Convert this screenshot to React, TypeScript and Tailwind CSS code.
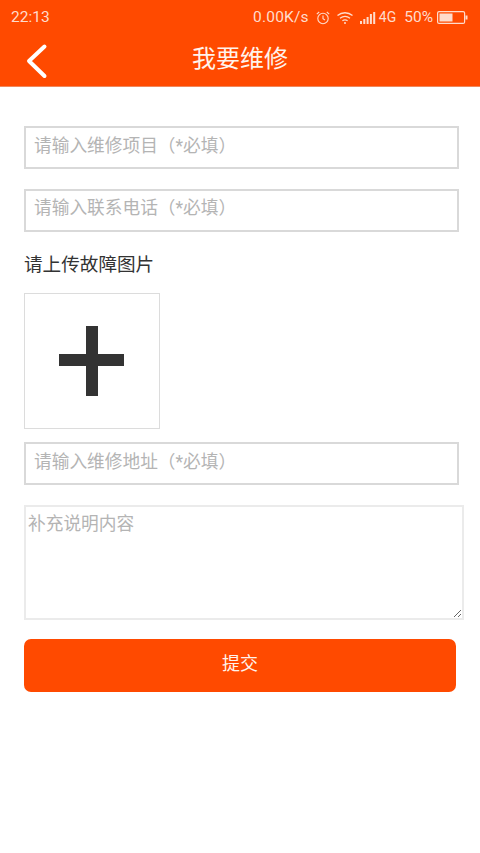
import React from "react";

const font = { fontFamily: '"Roboto", "Noto Sans CJK SC", sans-serif' };

function Field({ placeholder, className = "" }: { placeholder: string; className?: string }) {
  return (
    <input
      placeholder={placeholder}
      className={`block w-[435px] h-[43px] border-2 border-[#d9d9d9] bg-white pl-[8px] text-[17.7px] outline-none placeholder:text-[#b4b4b4] ${className}`}
    />
  );
}

function StatusIcons() {
  return (
    <div className="flex items-center text-[#ffdccc]">
      <span className="text-[15.5px] tracking-[0.2px]">0.00K/s</span>
      <svg width="16" height="16" viewBox="0 0 16 16" className="ml-[6px]" fill="none" stroke="currentColor" strokeWidth="1.1">
        <circle cx="8" cy="8.5" r="5.2" />
        <path d="M8 5.6V8.7L10 10M1.8 4.2L4.2 2M14.2 4.2L11.8 2" />
      </svg>
      <svg width="18" height="14" viewBox="0 0 18 14" className="ml-[5px]" fill="none" stroke="currentColor" strokeWidth="1.3">
        <path d="M1.5 4.5C6 .8 12 .8 16.5 4.5M4 7.3C7 5 11 5 14 7.3M6.4 9.8C8 8.7 10 8.7 11.6 9.8" />
        <circle cx="9" cy="12" r="1" fill="currentColor" stroke="none" />
      </svg>
      <svg width="16" height="14" viewBox="0 0 16 14" className="ml-[6px]" fill="currentColor">
        <rect x="0" y="10" width="2" height="3" />
        <rect x="3.3" y="8" width="2" height="5" />
        <rect x="6.6" y="6" width="2" height="7" />
        <rect x="9.9" y="3" width="2" height="10" />
        <rect x="13.2" y="1" width="2" height="12" />
      </svg>
      <span className="ml-[3px] text-[14px]">4G</span>
      <span className="ml-[8px] text-[15.5px]">50%</span>
      <svg width="31" height="13" viewBox="0 0 31 13" className="ml-[4px]">
        <rect x="0.6" y="0.6" width="27" height="11.8" rx="1.5" fill="none" stroke="currentColor" strokeWidth="1.2" />
        <rect x="2.5" y="2.5" width="13" height="8" fill="currentColor" />
        <rect x="28.5" y="4.5" width="2" height="4" fill="currentColor" />
      </svg>
    </div>
  );
}

export default function App() {
  return (
    <div className="min-h-[853px] w-[480px] bg-white" style={font}>
      <header className="h-[87px] bg-[#ff4a00] border-b border-[#f0885c]">
        <div className="flex h-[35px] items-center justify-between pl-[11px] pr-[12px]">
          <span className="text-[15.5px] text-[#ffdccc]">22:13</span>
          <StatusIcons />
        </div>
        <div className="relative flex h-[51px] items-center justify-center">
          <svg width="24" height="36" viewBox="0 0 24 36" className="absolute left-[25px] top-[8px]" fill="none" stroke="white" strokeWidth="4" strokeLinecap="round" strokeLinejoin="round">
            <path d="M19.5 3.5L4 18L19.5 33" />
          </svg>
          <h1 className="pb-[4px] text-[24px] font-normal text-[#fff3ec]">我要维修</h1>
        </div>
      </header>

      <main className="px-6 pt-[39px]">
        <Field placeholder="请输入维修项目（*必填）" className="pb-[4px]" />
        <Field placeholder="请输入联系电话（*必填）" className="mt-5 pb-[5px]" />
        <p className="mt-[21px] text-[18.6px] leading-[25px] text-[#333]">请上传故障图片</p>
        <div className="mt-[15px] flex h-[136px] w-[136px] items-center justify-center border border-[#dcdcdc]">
          <svg width="66" height="70" viewBox="0 0 66 70" fill="#333">
            <rect x="27" y="0" width="12" height="70" />
            <rect x="0" y="28" width="65" height="12" />
          </svg>
        </div>
        <Field placeholder="请输入维修地址（*必填）" className="mt-[13px] pb-[4px]" />
        <textarea
          placeholder="补充说明内容"
          className="mt-5 block h-[115px] w-[440px] border-2 border-[#ebebeb] bg-white px-[2px] py-[5px] text-[17.7px] leading-[25px] outline-none placeholder:text-[#b4b4b4]"
        />
        <button className="mt-[19px] block h-[53px] w-[432px] rounded-[7px] bg-[#ff4a00] pb-[4px] text-[18px] text-[#fff3ec]">
          提交
        </button>
      </main>
    </div>
  );
}
